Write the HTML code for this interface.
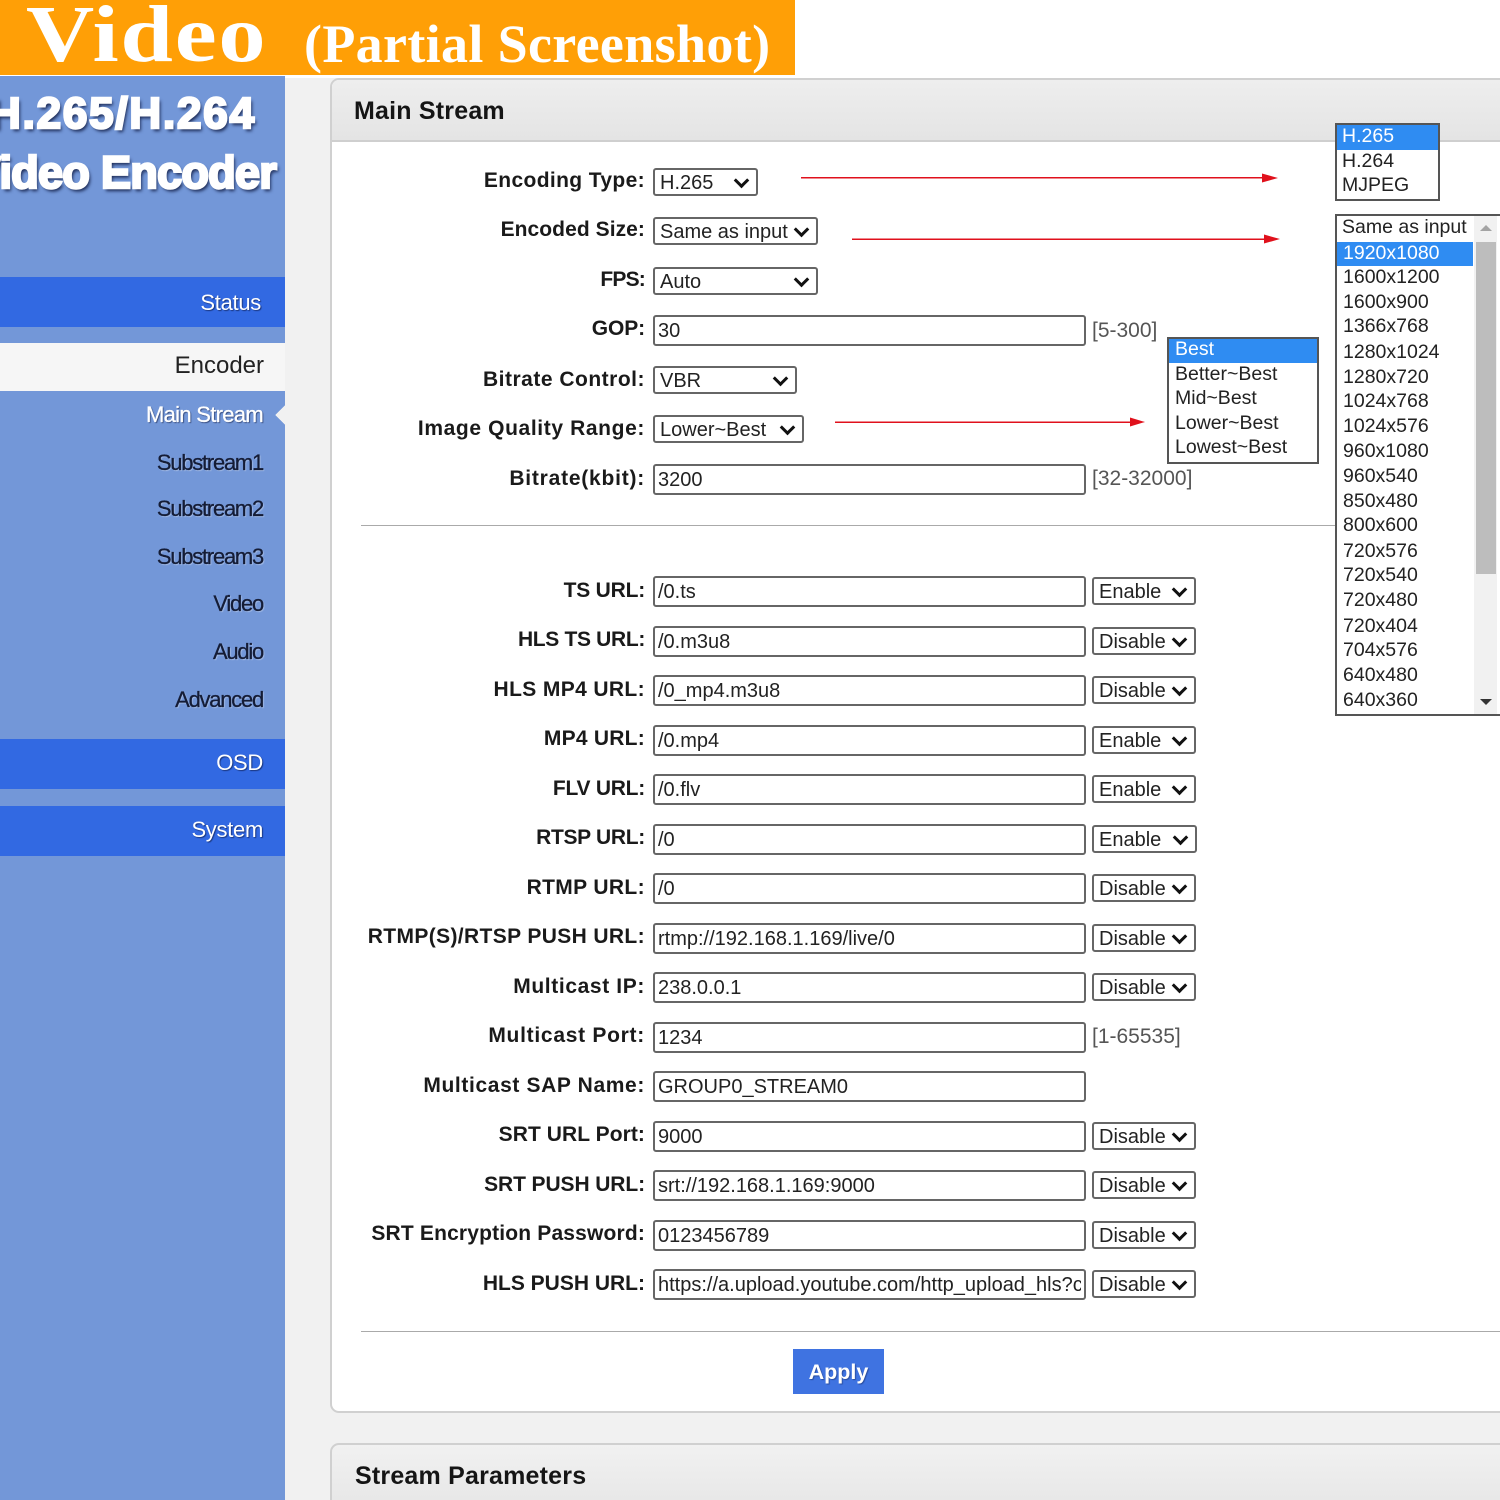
<!DOCTYPE html>
<html lang="en"><head><meta charset="utf-8"><title>Video Encoder - Main Stream</title>
<style>
html,body{margin:0;padding:0;background:#f0f0f0}
#p{position:relative;width:1500px;height:1500px;overflow:hidden;background:#f1f1f1;font-family:"Liberation Sans",sans-serif;color:#111}
#p div{position:absolute;box-sizing:border-box;white-space:nowrap}
.n{right:1237px;font-size:22px;line-height:30px;color:#141c36;letter-spacing:-1.25px;-webkit-text-stroke:.3px #141c36;text-shadow:1px 1px 1px rgba(255,255,255,.35)}
.w{color:#fff;letter-spacing:-.3px;-webkit-text-stroke:0;text-shadow:1px 1px 1px rgba(10,20,60,.6)}
.b{left:0;width:285px;background:#3269e2}
.l{right:855px;font-weight:700;font-size:21px;line-height:30px;color:#1a1a1a;letter-spacing:.37px}
.i{left:653px;width:433px;height:31px;border:2px solid #666;border-radius:3px;background:#fff;font-size:20px;line-height:29px;padding-left:3px;color:#222;overflow:hidden}
.i span{display:block;width:423px;overflow:hidden;white-space:nowrap}
.s{height:28px;border:2px solid #666;border-radius:3px;background:#fff;font-size:20px;line-height:27px;padding-left:5px;color:#222}
.s::after{content:"";position:absolute;right:9px;top:5px;width:8px;height:8px;border-right:3px solid #111;border-bottom:3px solid #111;transform:rotate(45deg)}
.t{left:1092px;width:104px}
.h{font-size:21px;line-height:30px;color:#555}
.o{font-size:19.5px;line-height:25px;color:#222;left:7px}
.x{left:2px;background:#2f8cf2;color:#fff}
</style></head><body><div id="p">

<div style="left:0;top:0;width:1500px;height:78px;background:#fff"></div>
<div style="left:0;top:0;width:795px;height:75px;background:#ff9f06"></div>
<div style="left:26px;top:-8px;font:700 80px/86px 'Liberation Serif',serif;color:#fff;letter-spacing:1.5px;transform:scaleX(1.18);transform-origin:0 50%">Video</div>
<div style="left:304px;top:13px;font:700 54px/62px 'Liberation Serif',serif;color:#fff;letter-spacing:.35px">(Partial Screenshot)</div>

<div style="left:0;top:76px;width:285px;height:1424px;background:#7397d8"></div>
<div style="left:-11px;top:87px;font:700 44px/54px 'Liberation Sans',sans-serif;color:#fff;letter-spacing:1.8px;-webkit-text-stroke:2.5px #fff;text-shadow:2px 3px 3px #1c2a55">H.265/H.264</div>
<div style="left:-29px;top:146px;font:700 45px/54px 'Liberation Sans',sans-serif;color:#fff;letter-spacing:-.7px;-webkit-text-stroke:2.5px #fff;text-shadow:2px 3px 3px #1c2a55">Video Encoder</div>

<div class="b" style="top:277px;height:50px"></div>
<div class="n w" style="top:288px;right:1239px">Status</div>
<div style="left:0;top:343px;width:285px;height:48px;background:#f6f6f6"></div>
<div style="right:1236px;top:351px;font-size:24px;line-height:30px;color:#222">Encoder</div>
<div class="n w" style="top:400px;letter-spacing:-.7px;-webkit-text-stroke:.3px #fff">Main Stream</div>
<div style="left:278px;top:408px;width:14px;height:14px;background:#f1f1f1;transform:rotate(45deg);clip-path:polygon(0 0,0 100%,100% 100%)"></div>
<div class="n" style="top:448px">Substream1</div>
<div class="n" style="top:494px">Substream2</div>
<div class="n" style="top:542px">Substream3</div>
<div class="n" style="top:589px">Video</div>
<div class="n" style="top:637px">Audio</div>
<div class="n" style="top:685px">Advanced</div>
<div class="b" style="top:739px;height:50px"></div>
<div class="n w" style="top:748px">OSD</div>
<div class="b" style="top:806px;height:50px"></div>
<div class="n w" style="top:815px">System</div>

<div style="left:330px;top:78px;width:1180px;height:1335px;background:#fff;border:2px solid #d0d0d0;border-radius:9px"></div>
<div style="left:332px;top:80px;width:1168px;height:62px;background:linear-gradient(#eeeeee,#e4e4e4);border-bottom:2px solid #cfcfcf;border-radius:7px 0 0 0"></div>
<div style="left:354px;top:96px;font-size:25px;line-height:30px;font-weight:700;color:#151515;letter-spacing:.2px">Main Stream</div>

<div class="l" style="top:166px">Encoding Type:</div>
<div class="s" style="left:653px;top:168px;width:105px">H.265</div>
<div class="l" style="top:215px;letter-spacing:.07px">Encoded Size:</div>
<div class="s" style="left:653px;top:217px;width:165px">Same as input</div>
<div class="l" style="top:265px;letter-spacing:-.8px">FPS:</div>
<div class="s" style="left:653px;top:267px;width:165px">Auto</div>
<div class="l" style="top:314px;letter-spacing:-.1px">GOP:</div>
<div class="i" style="top:315px">30</div>
<div class="h" style="left:1092px;top:316px">[5-300]</div>
<div class="l" style="top:365px;letter-spacing:.5px">Bitrate Control:</div>
<div class="s" style="left:653px;top:366px;width:144px">VBR</div>
<div class="l" style="top:414px;letter-spacing:.62px">Image Quality Range:</div>
<div class="s" style="left:653px;top:415px;width:151px">Lower~Best</div>
<div class="l" style="top:464px;letter-spacing:.77px">Bitrate(kbit):</div>
<div class="i" style="top:464px">3200</div>
<div class="h" style="left:1092px;top:464px">[32-32000]</div>

<div style="left:361px;top:525px;width:1139px;height:1px;background:#aaa"></div>

<div class="l" style="top:576px;letter-spacing:-.2px">TS URL:</div><div class="i" style="top:576px">/0.ts</div><div class="s t" style="top:577px">Enable</div>
<div class="l" style="top:625px;letter-spacing:-.33px">HLS TS URL:</div><div class="i" style="top:626px">/0.m3u8</div><div class="s t" style="top:627px">Disable</div>
<div class="l" style="top:675px">HLS MP4 URL:</div><div class="i" style="top:675px">/0_mp4.m3u8</div><div class="s t" style="top:676px">Disable</div>
<div class="l" style="top:724px;letter-spacing:.25px">MP4 URL:</div><div class="i" style="top:725px">/0.mp4</div><div class="s t" style="top:726px">Enable</div>
<div class="l" style="top:774px;letter-spacing:-.25px">FLV URL:</div><div class="i" style="top:774px">/0.flv</div><div class="s t" style="top:775px">Enable</div>
<div class="l" style="top:823px;letter-spacing:-.3px">RTSP URL:</div><div class="i" style="top:824px">/0</div><div class="s t" style="top:825px;width:105px">Enable</div>
<div class="l" style="top:873px">RTMP URL:</div><div class="i" style="top:873px">/0</div><div class="s t" style="top:874px">Disable</div>
<div class="l" style="top:922px">RTMP(S)/RTSP PUSH URL:</div><div class="i" style="top:923px">rtmp://192.168.1.169/live/0</div><div class="s t" style="top:924px">Disable</div>
<div class="l" style="top:972px;letter-spacing:.62px">Multicast IP:</div><div class="i" style="top:972px">238.0.0.1</div><div class="s t" style="top:973px">Disable</div>
<div class="l" style="top:1021px;letter-spacing:.72px">Multicast Port:</div><div class="i" style="top:1022px">1234</div><div class="h" style="left:1092px;top:1022px">[1-65535]</div>
<div class="l" style="top:1071px;letter-spacing:.63px">Multicast SAP Name:</div><div class="i" style="top:1071px">GROUP0_STREAM0</div>
<div class="l" style="top:1120px;letter-spacing:.07px">SRT URL Port:</div><div class="i" style="top:1121px">9000</div><div class="s t" style="top:1122px">Disable</div>
<div class="l" style="top:1170px;letter-spacing:-.1px">SRT PUSH URL:</div><div class="i" style="top:1170px">srt://192.168.1.169:9000</div><div class="s t" style="top:1171px">Disable</div>
<div class="l" style="top:1219px;letter-spacing:.17px">SRT Encryption Password:</div><div class="i" style="top:1220px">0123456789</div><div class="s t" style="top:1221px">Disable</div>
<div class="l" style="top:1269px;letter-spacing:0">HLS PUSH URL:</div><div class="i" style="top:1269px"><span>https://a.upload.youtube.com/http_upload_hls?cid=</span></div><div class="s t" style="top:1270px">Disable</div>

<div style="left:361px;top:1331px;width:1139px;height:1px;background:#aaa"></div>
<div style="left:793px;top:1349px;width:91px;height:45px;background:#3f73e1;color:#fff;font-weight:700;font-size:21.5px;line-height:47px;text-align:center;text-shadow:1px 1px 1px rgba(10,20,60,.4)">Apply</div>

<div style="left:330px;top:1443px;width:1180px;height:70px;background:linear-gradient(#f1f1f1,#e6e6e6);border:2px solid #d0d0d0;border-radius:9px 9px 0 0"></div>
<div style="left:355px;top:1461px;font-size:25px;line-height:30px;font-weight:700;color:#151515;letter-spacing:.2px">Stream Parameters</div>

<svg style="position:absolute;left:0;top:0" width="1500" height="1500" viewBox="0 0 1500 1500" fill="#e0111c" stroke="none">
<path d="M801 177h464v1.500h-464z"/><path d="M1262 173.500l16 4.500-16 4.500z"/>
<path d="M852 238.500h416v1.500h-416z"/><path d="M1264 234.500l16 4.500-16 4.500z"/>
<path d="M835 421.500h298v1.500h-298z"/><path d="M1130 417.500l15 4.500-15 4.500z"/>
</svg>

<div style="left:1335px;top:123px;width:105px;height:78px;background:#fff;border:2px solid #555">
<div class="x" style="left:0;top:0;width:101px;height:25px"></div>
<div class="o" style="left:5px;top:-1px;color:#fff">H.265</div>
<div class="o" style="left:5px;top:24px">H.264</div>
<div class="o" style="left:5px;top:48px">MJPEG</div>
</div>

<div style="left:1167px;top:337px;width:152px;height:127px;background:#fff;border:2px solid #555">
<div class="x" style="left:0;top:0;width:148px;height:24px"></div>
<div class="o" style="left:6px;top:-2px;color:#fff">Best</div>
<div class="o" style="left:6px;top:23px">Better~Best</div>
<div class="o" style="left:6px;top:47px">Mid~Best</div>
<div class="o" style="left:6px;top:72px">Lower~Best</div>
<div class="o" style="left:6px;top:96px">Lowest~Best</div>
</div>

<div style="left:1335px;top:214px;width:175px;height:502px;background:#fff;border:2px solid #555">
<div style="left:137px;top:0;width:23px;height:498px;background:#f1f1f1"></div>
<div style="left:139px;top:26px;width:20px;height:332px;background:#bdbdbd"></div>
<div style="left:143px;top:9px;width:0;height:0;border-left:6px solid transparent;border-right:6px solid transparent;border-bottom:6px solid #a3a3a3"></div>
<div style="left:143px;top:483px;width:0;height:0;border-left:6px solid transparent;border-right:6px solid transparent;border-top:6px solid #333"></div>
<div class="x" style="left:0;top:26px;width:136px;height:24px"></div>
<div class="o" style="left:5px;top:-1px">Same as input</div>
<div class="o" style="left:6px;top:25px;color:#fff">1920x1080</div>
<div class="o" style="left:6px;top:49px">1600x1200</div>
<div class="o" style="left:6px;top:74px">1600x900</div>
<div class="o" style="left:6px;top:98px">1366x768</div>
<div class="o" style="left:6px;top:124px">1280x1024</div>
<div class="o" style="left:6px;top:149px">1280x720</div>
<div class="o" style="left:6px;top:173px">1024x768</div>
<div class="o" style="left:6px;top:198px">1024x576</div>
<div class="o" style="left:6px;top:223px">960x1080</div>
<div class="o" style="left:6px;top:248px">960x540</div>
<div class="o" style="left:6px;top:273px">850x480</div>
<div class="o" style="left:6px;top:297px">800x600</div>
<div class="o" style="left:6px;top:323px">720x576</div>
<div class="o" style="left:6px;top:347px">720x540</div>
<div class="o" style="left:6px;top:372px">720x480</div>
<div class="o" style="left:6px;top:398px">720x404</div>
<div class="o" style="left:6px;top:422px">704x576</div>
<div class="o" style="left:6px;top:447px">640x480</div>
<div class="o" style="left:6px;top:472px">640x360</div>
</div>

</div></body></html>
